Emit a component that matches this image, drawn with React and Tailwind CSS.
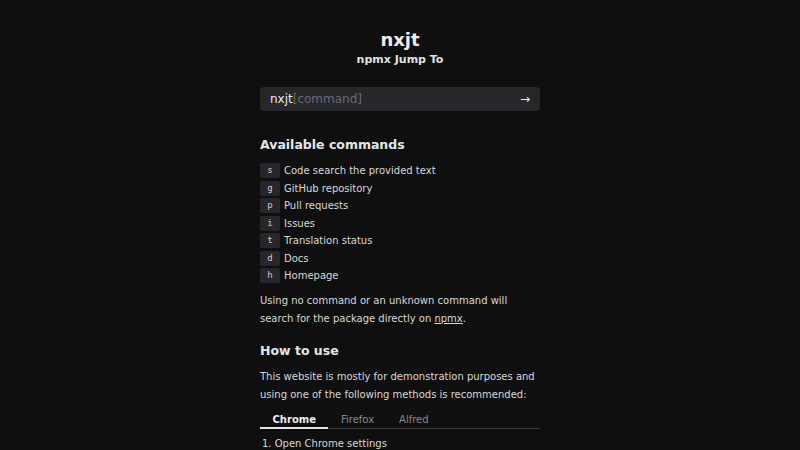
import React, { useState } from "react";

const commands = [
  ["s", "Code search the provided text"],
  ["g", "GitHub repository"],
  ["p", "Pull requests"],
  ["i", "Issues"],
  ["t", "Translation status"],
  ["d", "Docs"],
  ["h", "Homepage"],
];

const tabs = ["Chrome", "Firefox", "Alfred"];

export default function App() {
  const [tab, setTab] = useState("Chrome");

  return (
    <div className="min-h-screen bg-[#0f0f10] text-[#d8d8d8] font-['DejaVu_Sans',sans-serif]">
      <div className="w-[280px] mx-auto pt-[29px] flex flex-col">
        <h1 className="text-center text-[18px] leading-[22px] font-bold text-[#ececec]">nxjt</h1>
        <p className="mt-[2px] text-center text-[11px] leading-[14px] font-bold text-[#e0e0e0]">
          npmx Jump To
        </p>

        <div className="mt-[20px] h-[24px] rounded-[4px] bg-[#26262b] flex items-center px-[10px] text-[12px]">
          <span className="text-[#ececec]">nxjt</span>
          <span className="text-[#6c6c73]">[command]</span>
          <span className="ml-auto text-[#ececec] text-[12px]">→</span>
        </div>

        <h2 className="mt-[26px] text-[12.5px] leading-[16px] font-bold text-[#e6e6e6]">
          Available commands
        </h2>

        <ul className="mt-[9px] flex flex-col">
          {commands.map(([k, label]) => (
            <li key={k} className="h-[17.5px] flex items-center gap-[4px] text-[10px]">
              <kbd className="w-[20px] h-[15px] rounded-[2px] bg-[#26262b] flex items-center justify-center font-['DejaVu_Sans_Mono',monospace] text-[9px] text-[#d0d0d0]">
                {k}
              </kbd>
              <span>{label}</span>
            </li>
          ))}
        </ul>

        <p className="mt-[7px] text-[10px] leading-[18px]">
          Using no command or an unknown command will search for the package directly on{" "}
          <a href="#" className="underline">npmx</a>.
        </p>

        <h2 className="mt-[15px] text-[12.5px] leading-[16px] font-bold text-[#e6e6e6]">How to use</h2>

        <p className="mt-[9px] text-[10px] leading-[18px]">
          This website is mostly for demonstration purposes and using one of the following methods is
          recommended:
        </p>

        <div className="mt-[7px] flex border-b border-[#3a3a3e]">
          {tabs.map((t) => (
            <button
              key={t}
              onClick={() => setTab(t)}
              className={`px-[12.5px] h-[18px] text-[10px] leading-[18px] -mb-px border-b-2 ${
                tab === t
                  ? "font-bold text-[#ececec] border-[#e6e6e6]"
                  : "text-[#8a8a8f] border-transparent"
              }`}
            >
              {t}
            </button>
          ))}
        </div>

        <ol className="mt-[6px] pl-[2px] text-[10px] leading-[18px]">
          <li>1. Open {tab} settings</li>
        </ol>
      </div>
    </div>
  );
}
